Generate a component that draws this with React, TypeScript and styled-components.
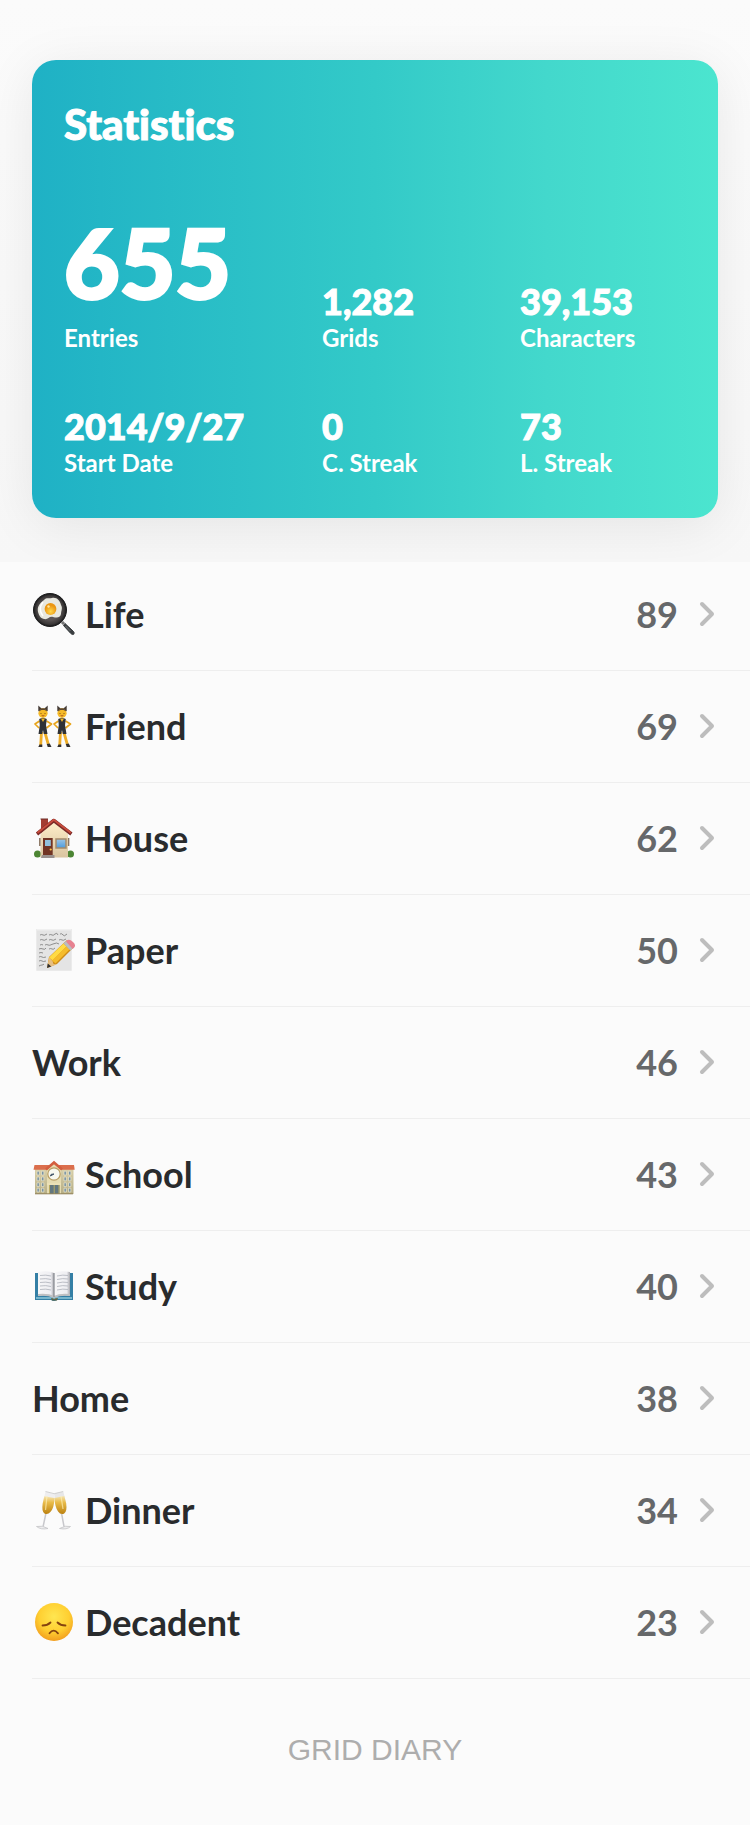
import React from 'react';
import styled, { createGlobalStyle } from 'styled-components';

const GlobalStyle = createGlobalStyle`
  * { box-sizing: border-box; }
  body {
    margin: 0;
    background: #fbfbfb;
    color: #292b2d;
    font-family: Lato, 'Open Sans', sans-serif;
    font-variant-ligatures: none;
  }
`;

const Header = styled.header`
  position: relative;
  z-index: 1;
  padding: 60px 32px 44px;
  overflow: hidden;
  background: linear-gradient(#fbfbfb, #f7f7f7);
`;

const Card = styled.section`
  padding: 40px 32px 39px;
  border-radius: 24px;
  color: #fff;
  background: linear-gradient(90deg, #1fb1c5 0%, #33cac8 50%, #43d8cc 75%, #4be5cf 100%);
  box-shadow: 0 8px 52px rgba(0, 0, 0, 0.08);
`;

const CardTitle = styled.h1`
  margin: 0;
  font-size: 42px;
  line-height: 48px;
  font-weight: 900;
  -webkit-text-stroke: 1px currentColor;
`;

const Stats = styled.dl`
  display: grid;
  grid-template-columns: 258fr 198fr 166fr;
  align-items: end;
  row-gap: 51px;
  margin: 54px 0 0;
`;

const Stat = styled.div`
  display: flex;
  flex-direction: column-reverse;
`;

const StatLabel = styled.dt`
  font-size: 24px;
  line-height: 32px;
  font-weight: 700;
`;

const StatValue = styled.dd<{ $large?: boolean }>`
  margin: 0;
  font-size: ${(p) => (p.$large ? 96 : 36)}px;
  line-height: ${(p) => (p.$large ? 120 : 42)}px;
  font-weight: 900;
  white-space: nowrap;
  -webkit-text-stroke: ${(p) => (p.$large ? 3 : 1)}px currentColor;
`;

const TopicList = styled.ul`
  list-style: none;
  margin: -4px 0 0;
  padding: 0 0 0 32px;
`;

const TopicLink = styled.a`
  display: flex;
  align-items: center;
  height: 113px;
  margin-bottom: -1px;
  padding-right: 32px;
  border-bottom: 1px solid #eeeeee;
  color: inherit;
  text-decoration: none;
  font-size: 36px;
  line-height: 44px;
  font-weight: 700;
`;

const Emoji = styled.svg`
  flex: none;
  width: 44px;
  height: 44px;
  margin-right: 9px;
`;

const TopicName = styled.span`
  flex: 1;
`;

const Count = styled.span`
  color: #66686a;
`;

const Chevron = styled.svg`
  flex: none;
  width: 20px;
  height: 28px;
  margin: 0 2px 0 18px;
`;

const Footer = styled.footer`
  padding: 56px 32px 59px;
  text-align: center;
  color: #adadad;
  font-family: 'Liberation Sans', sans-serif;
  font-size: 30px;
  line-height: 32px;
`;

const Cooking = () => (
  <>
    <defs>
      <radialGradient id="pan"><stop offset=".6" stopColor="#5b5555" /><stop offset=".86" stopColor="#3b3838" /><stop offset="1" stopColor="#171819" /></radialGradient>
      <radialGradient id="yolk" cy=".7"><stop offset="0" stopColor="#ffd84a" /><stop offset="1" stopColor="#eb9612" /></radialGradient>
    </defs>
    <path d="m30 30 2 2" stroke="#777" strokeWidth="3" />
    <path d="m33 31.5 8 7.5q2 2 .8 3.2-1.3 1-3-.7l-7.3-8Z" fill="#393d3f" stroke="#393d3f" />
    <path d="m33.5 34 5 5" stroke="#85898b" strokeWidth=".8" />
    <circle cx="18" cy="18" r="16.5" fill="url(#pan)" stroke="#1b1b1c" />
    <path d="M12 8c3-3 4-1 8-2 5-1 8 3 9 7 2 3 0 6 0 9-1 4-4 4-8 3-4-1-5 3-9 2-4-1-5-4-6-7-1-5 1-8 6-12Z" fill="#e8e8df" />
    <path d="M11 10c-4 5-3 10 0 14" fill="none" stroke="#fff" strokeWidth="1.5" />
    <circle cx="18.5" cy="17" r="5.9" fill="url(#yolk)" />
    <circle cx="16.5" cy="14.5" r="1.2" fill="#ffe6a0" />
  </>
);

const Dancer = ({ x }: { x: number }) => (
  <g transform={`translate(${x} 0)`}>
    <path d="M-3.5 17-8 20l4 4M3.5 17l5 3-5 4" fill="none" stroke="#e8a51b" strokeWidth="1.7" strokeLinejoin="round" />
    <path d="m-1.5 28-.8 13M1.8 28l3.4 12" stroke="#eead27" strokeWidth="2.8" />
    <path d="M-3.5 40.5h2.8V43h-4ZM3.8 40l3-.5L8.5 43H4.7Z" fill="#33302f" />
    <path d="M-3.8 15 0 13.5 3.8 15 3 21l1.5 9H.8L0 26l-.8 4h-3.7l1.3-9Z" fill="#303236" />
    <path d="M-2 14.5 0 18l2-3.5Z" fill="#f2b72d" />
    <path d="M-4.7 7V1.5l3 2.8h3.4l3-2.8V7Z" fill="#443b36" />
    <circle cy="9.2" r="4.6" fill="#f5b928" />
    <path d="M-4.5 7.5Q-3 4.5 0 4.5t4.5 3L1.5 6h-3Z" fill="#5a4632" />
    <path d="M-2 9v.7m4-.7v.7" stroke="#59300d" strokeWidth="1" />
    <path d="M-1.4 11.4q1.4 1.2 2.8 0" fill="none" stroke="#9c3d18" strokeWidth=".8" />
  </g>
);

const House = () => (
  <>
    <defs>
      <linearGradient id="wall" x2="0" y2="1"><stop stopColor="#fff0ca" /><stop offset="1" stopColor="#d9c4a0" /></linearGradient>
      <linearGradient id="glass" x2="0" y2="1"><stop stopColor="#9cc5e4" /><stop offset="1" stopColor="#4d9bdc" /></linearGradient>
    </defs>
    <path d="M9 3h7v9l-7 5Z" fill="#a33d32" /><path d="M8.5 3H16" stroke="#6f302b" />
    <circle cx="5.5" cy="38" r="3.5" fill="#4c8533" /><circle cx="38.5" cy="38" r="3.5" fill="#4c8533" />
    <path d="m8.5 18 13-13L36 18v23.5H8.5Z" fill="url(#wall)" />
    <path d="M7.8 22v8m28.8-8v8" stroke="#8b7764" strokeWidth="1.5" />
    <path d="M5 18 21.8 4.5 39.4 18" fill="none" stroke="#7d2b27" strokeWidth="3.6" strokeLinejoin="round" />
    <path d="M5.5 16.8 21.8 3.8l17 13" fill="none" stroke="#c94d3d" strokeWidth="1.8" />
    <path d="M11 22h9.7v18H11Z" fill="#713424" /><path d="M13 24h5.8v6H13Z" fill="#91c0dc" />
    <circle cx="18.7" cy="33.5" r="1.1" fill="#ffc440" />
    <path d="M24 23h10v9H24Z" fill="url(#glass)" stroke="#a48a69" strokeWidth="1.5" />
    <path d="M10 39h12.5v3H9Z" fill="#99908d" />
  </>
);

const Memo = () => (
  <>
    <path d="M4.3 1h35.4v41.7H4.3Z" fill="#e4e4e4" />
    <path d="M5 1.8h34" stroke="#f5f5f5" />
    <path
      d="M8 7q2-1 3 0t4-1M17 7q2-1 3 0t3-1 3 1M28 6q2-1 3 1t4-1M8 12q2-1 3 0t4-1M17 12q2-1 3 0t4-1M27 12q2-1 3 0t4-1M8 17q2-1 3 0M13 17q2-1 3 0t5-1 6 0M7 21q2-1 4 0t3-1M17 21q2-1 3 0t3-1M7 25q2-1 4 0M7 29q2-1 3 0t4 0M7 33q2-1 3 0t4 0M7 38q2-1 3-1t2-1"
      fill="none" stroke="#777" strokeWidth=".8"
    />
    <path d="m15 40 2-11 18-17 7 7-17 17Z" fill="#cf8c18" />
    <path d="m17 29.5 14.5-14 3 3-14 14Z" fill="#ffdb45" />
    <path d="m20 32.5 14.5-14 3 3-14 14Z" fill="#f5bc2b" />
    <path d="m15 40 2-10.5 3.5 3.5 1 3 3 .5Z" fill="#e6bf83" /><path d="m15 40 .8-4.5 3.5 3Z" fill="#303030" />
    <path d="m31.5 15.5 3-3 7 7-3.2 3Z" fill="#b9bdc2" />
    <path d="m34 13.5 1.6-1.4q2-1.2 5.4 1.9t1.2 5.5l-1.5 1.5Z" fill="#e78291" />
  </>
);

const School = () => (
  <>
    <defs><linearGradient id="brick" x2="0" y2="1"><stop stopColor="#d9d0aa" /><stop offset="1" stopColor="#b5ad84" /></linearGradient></defs>
    <path d="M3 17h38.5v25H3Z" fill="url(#brick)" />
    <path d="M2.5 13H42l.7 4.8H1.5Z" fill="#db6e4c" />
    <path d="M15 17 22 11l7 6v25H15Z" fill="#e6dcb1" />
    <path d="m14 17.5 8-7 8 7" fill="none" stroke="#d35f3f" strokeWidth="2.7" />
    {[19.2, 25, 30.8, 36.2].map((y) => (
      <path key={y} d={`M5 ${y}h2.4v3.8H5Zm4.5 0h2.4v3.8H9.5Zm22.5 0h2.4v3.8H32Zm4.5 0h2.4v3.8h-2.4Z`} fill="#7893a3" stroke="#eee7cc" strokeWidth=".7" />
    ))}
    <circle cx="22" cy="22" r="6.2" fill="#f8f8ef" stroke="#b89d62" strokeWidth="1.2" />
    <path d="m22 22-3.6 2 .8-1.7Z" fill="#45576a" stroke="#45576a" />
    <path d="M17 33h10.5v9H17Z" fill="#63777f" /><path d="M22.2 33v9m-4.7-9v9m9.5-9v9" stroke="#b9aa61" />
    <path d="M15 32h14" stroke="#f1e6bd" />
    <path d="M3 41.8h38" stroke="#94845a" />
  </>
);

const Book = () => (
  <>
    <defs><linearGradient id="page"><stop stopColor="#f7f7f8" /><stop offset=".8" stopColor="#eeeef2" /><stop offset="1" stopColor="#a6a6ac" /></linearGradient></defs>
    <path d="M3 9h38v27H25q-3 2-6 0H3Z" fill="#347fa5" />
    <path d="M4 33h16l2 1 2-1h16v2H4Z" fill="#77b5cc" />
    <path d="M6 8q10-2 16 1v24q-6-3-16-1Z" fill="url(#page)" />
    <path d="M38 8q-10-2-16 1v24q6-3 16-1Z" fill="url(#page)" />
    <path d="M6 31q10-1 16 2 6-3 16-2" fill="none" stroke="#bfc0c2" strokeWidth="2" />
    <path d="M22 9v24" stroke="#8c8f95" strokeWidth="1.3" />
    {[11.5, 15, 18.5, 22, 25.5].map((y) => (
      <path key={y} d={`M8 ${y}q6-1 11 .5m6 0q6-1.5 11-.5`} fill="none" stroke="#b4b8c0" strokeWidth=".9" />
    ))}
    <path d="M19 34q3 0 3 2 0-2 4-2l-1 2.5h-5Z" fill="#63633e" />
  </>
);

const Glasses = () => (
  <>
    <defs><linearGradient id="wine" x2="0" y2="1"><stop stopColor="#f5e4b2" /><stop offset=".35" stopColor="#e9bc4b" /><stop offset="1" stopColor="#bd8210" /></linearGradient></defs>
    <path d="m14 25-3 14m18.5-14 2.6 14" stroke="#c8c8cc" strokeWidth="1.5" />
    <path d="M4.5 38.5q6-1.5 11.5 2-7 1.5-11.5-2Zm23 2q6-3.5 11-2-3.5 3.5-11 2Z" fill="#ededee" stroke="#c4c4c7" strokeWidth=".8" />
    <path d="m13.5 3.5 8.7 2.7Q23 19 18.5 24q-2.5 3.5-6 1.5-3-2-2-10Z" fill="#eeeef0" />
    <path d="m12.3 8.3 10 1.7q0 10-4 14-2.7 3-5.8 1.5-3-2-1.8-10Z" fill="url(#wine)" />
    <path d="m22.3 5.5 9-2 2.8 11q1.5 9-2 11-3.5 2-6-2-3.5-5-3.8-18Z" fill="#e7e7e8" />
    <path d="m22.3 10 10-2 1.8 7q1.2 8.5-2 10.5-3.2 1.7-6-2-3-4-3.8-13.5Z" fill="url(#wine)" />
    <path d="m15 8-1.5 14m15.5-14 2 13" stroke="#fff1b8" strokeWidth="1.3" opacity=".65" />
    <path d="m13.5 3.5 8.7 2.2 9-2.2" fill="none" stroke="#c7c7c7" strokeWidth=".8" />
  </>
);

const SadFace = () => (
  <>
    <defs><radialGradient id="face" cy=".36" r=".66"><stop stopColor="#ffe651" /><stop offset=".6" stopColor="#ffcf31" /><stop offset="1" stopColor="#f19a1d" /></radialGradient></defs>
    <circle cx="22" cy="22" r="19" fill="url(#face)" />
    <path d="M10.5 25.5q5 0 8-3m7 0q3 3 8 3m-16 7.8q4-5.3 8.5 0" fill="none" stroke="#85430f" strokeWidth="1.8" strokeLinecap="round" />
  </>
);

type Topic = { name: string; count: number; art?: React.ReactNode };

const topics: Topic[] = [
  { name: 'Life', count: 89, art: <Cooking /> },
  { name: 'Friend', count: 69, art: <><Dancer x={11} /><Dancer x={30} /></> },
  { name: 'House', count: 62, art: <House /> },
  { name: 'Paper', count: 50, art: <Memo /> },
  { name: 'Work', count: 46 },
  { name: 'School', count: 43, art: <School /> },
  { name: 'Study', count: 40, art: <Book /> },
  { name: 'Home', count: 38 },
  { name: 'Dinner', count: 34, art: <Glasses /> },
  { name: 'Decadent', count: 23, art: <SadFace /> },
];

const stats = [
  { label: 'Entries', value: '655', large: true },
  { label: 'Grids', value: '1,282' },
  { label: 'Characters', value: '39,153' },
  { label: 'Start Date', value: '2014/9/27' },
  { label: 'C. Streak', value: '0' },
  { label: 'L. Streak', value: '73' },
];

export default function App() {
  return (
    <>
      <GlobalStyle />
      <Header>
        <Card>
          <CardTitle>Statistics</CardTitle>
          <Stats>
            {stats.map((s) => (
              <Stat key={s.label}>
                <StatLabel>{s.label}</StatLabel>
                <StatValue $large={s.large}>{s.value}</StatValue>
              </Stat>
            ))}
          </Stats>
        </Card>
      </Header>
      <main>
        <TopicList>
          {topics.map((t) => (
            <li key={t.name}>
              <TopicLink href={`#${t.name.toLowerCase()}`}>
                {t.art && <Emoji viewBox="0 0 44 44" aria-hidden="true">{t.art}</Emoji>}
                <TopicName>{t.name}</TopicName>
                <Count>{t.count}</Count>
                <Chevron viewBox="0 0 20 28" aria-hidden="true">
                  <path d="m6 4 10 10L6 24" fill="none" stroke="#bdbdbd" strokeWidth="4" strokeLinecap="round" strokeLinejoin="round" />
                </Chevron>
              </TopicLink>
            </li>
          ))}
        </TopicList>
      </main>
      <Footer>GRID DIARY</Footer>
    </>
  );
}
